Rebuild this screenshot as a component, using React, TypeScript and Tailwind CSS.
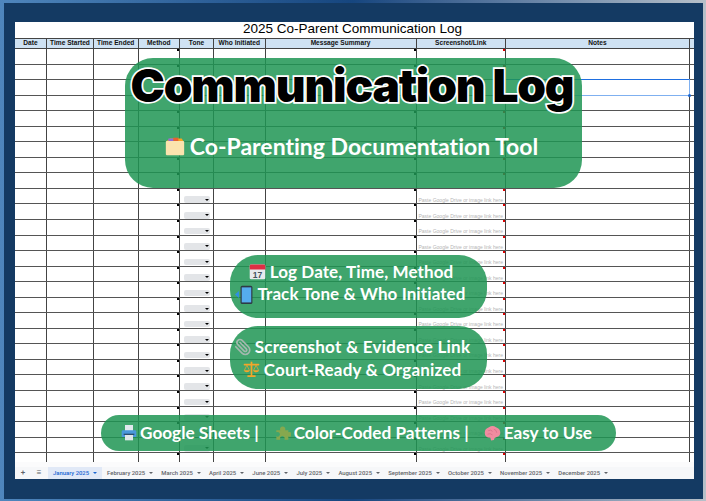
const font = "font-['Lato','Open_Sans',sans-serif] [font-variant-ligatures:none]";
const card = "absolute bg-[#1f9553]/85 text-white font-bold";
const colWidths = [32, 47, 44.5, 41.5, 34, 51.5, 151, 89.5, 184];
const headers = ["Date", "Time Started", "Time Ended", "Method", "Tone", "Who Initiated", "Message Summary", "Screenshot/Link", "Notes"];
const tabs = ["February 2025", "March 2025", "April 2025", "June 2025", "July 2025", "August 2025", "September 2025", "October 2025", "November 2025", "December 2025"];
const rows = Array.from({ length: 27 }, (_, i) => i);

const Folder = () => (
  <svg viewBox="0 0 24 24" className="w-5 h-5 shrink-0">
    <path d="M2 6 L6 3 H20 L22 6 Z" fill="#f5a623" />
    <rect x="4" y="3" width="7" height="5" fill="#8e6cd8" />
    <rect x="10" y="2" width="6" height="6" fill="#e8622c" />
    <rect x="1" y="6" width="22" height="17" rx="1" fill="#fbe3ae" />
  </svg>
);
const Calendar = () => (
  <svg viewBox="0 0 24 24" className="w-[17px] h-[17px] shrink-0">
    <rect x="1" y="2" width="22" height="21" rx="2" fill="#e8eaed" />
    <path d="M1 9 V4 a2 2 0 0 1 2 -2 H21 a2 2 0 0 1 2 2 V9 Z" fill="#dd2e44" />
    <text x="12" y="21" textAnchor="middle" fontSize="12" fontWeight="700" fill="#45535e" fontFamily="Liberation Sans">17</text>
  </svg>
);
const Phone = () => (
  <svg viewBox="0 0 24 24" className="w-[19px] h-[19px] shrink-0">
    <path d="M0 12 L5 7.5 V16.5 Z" fill="#2f8fe6" />
    <rect x="7" y="1" width="15" height="23" rx="2" fill="#2e3a45" />
    <rect x="8.5" y="3" width="12" height="19" fill="#55acee" />
  </svg>
);
const Clip = () => (
  <svg viewBox="0 0 24 24" className="w-[18px] h-[18px] shrink-0" fill="none" stroke="#a3b8ae" strokeWidth="2.2" strokeLinecap="round" strokeLinejoin="round">
    <path transform="translate(24 0) scale(-1 1)" d="m16 6-8.414 8.586a2 2 0 0 0 2.829 2.829l8.414-8.586a4 4 0 1 0-5.657-5.657l-8.379 8.551a6 6 0 1 0 8.485 8.485l8.379-8.551" />
  </svg>
);
const Scales = () => (
  <svg viewBox="0 0 24 24" className="w-[17px] h-[17px] shrink-0" fill="#f4a62a">
    <rect x="1" y="4" width="22" height="2.4" rx="1" />
    <rect x="10.8" y="1" width="2.4" height="20" />
    <rect x="6" y="20" width="12" height="2.6" rx="1" />
    <path d="M1 13 H10 Q9 16 5.5 16 Q2 16 1 13 Z M14 13 H23 Q22 16 18.5 16 Q15 16 14 13 Z" />
    <path d="M5.5 6 L2 13 M5.5 6 L9 13 M18.5 6 L15 13 M18.5 6 L22 13" stroke="#f4a62a" strokeWidth="1" fill="none" />
  </svg>
);
const Printer = () => (
  <svg viewBox="0 0 24 24" className="w-[16px] h-[16px] shrink-0">
    <rect x="6" y="0" width="12" height="9" fill="#e1e8ed" />
    <path d="M1 10 a2 2 0 0 1 2 -2 H21 a2 2 0 0 1 2 2 V18 H1 Z" fill="#4a98dc" />
    <rect x="6" y="14" width="12" height="9" fill="#dfe6ea" />
    <rect x="4" y="13" width="16" height="2" fill="#2d4f6e" />
  </svg>
);
const Puzzle = () => (
  <svg viewBox="0 0 24 24" className="w-[16px] h-[16px] shrink-0" fill="#86a84e">
    <path d="M2 8 H8 a4 4 0 1 1 7 0 H20 V11 a3.5 3.5 0 1 1 0 6 V22 H14 a3.5 3.5 0 1 0 -6 0 H2 V17 a3.5 3.5 0 1 0 0 -6 Z" />
  </svg>
);
const Brain = () => (
  <svg viewBox="0 0 24 24" className="w-[17px] h-[17px] shrink-0">
    <path d="M7 3 Q12 0 17 3 Q23 5 23 11 Q23 16 18 17 Q14 18 14 21 L10 22 L9 18 Q1 18 1 11 Q1 5 7 3 Z" fill="#f08ca0" />
    <path d="M6 8 Q10 6 12 9 M14 6 Q18 7 18 11 M5 13 Q9 11 12 14" stroke="#d9708a" strokeWidth="1.2" fill="none" />
  </svg>
);

const Caret = ({ color = "border-t-black" }: { color?: string }) => (
  <span className={`w-0 h-0 border-l-[2px] border-r-[2px] border-t-[2px] border-l-transparent border-r-transparent ${color}`} />
);

const Cell = ({ col, row }: { col: number; row: number }) => (
  <div className="relative flex items-end justify-center pb-[0.5px] border-r border-[#444] overflow-hidden" style={{ width: colWidths[col] }}>
    {(col === 3 || col === 6) && <span className="absolute top-0 right-0 w-[2px] h-[2px] bg-black" />}
    {col === 7 && <span className="absolute top-0 right-0 w-[2px] h-[2px] bg-[#d00]" />}
    {col === 4 && row >= 9 && row < 26 && (
      <div className="w-[26px] h-[6.5px] bg-[#e3e5e8] rounded-[2px] flex items-center justify-end pr-[1px]">
        <Caret />
      </div>
    )}
    {col === 7 && row >= 9 && row < 26 && (
      <span className="text-[5px] leading-[6px] text-[#b5b5b5] whitespace-nowrap">Paste Google Drive or image link here</span>
    )}
  </div>
);

export default function App() {
  return (
    <div className="w-[706px] h-[501px] overflow-hidden bg-gradient-to-r from-[#4f86bd] via-[#16467f] to-[#b7c0c9] pt-[3px] pl-[4px] pr-[3px] pb-[2px] relative">
      <div className="w-full h-full bg-[#143a63] pt-[19px] pl-[11px]">
        <div className="w-[679px] h-[457px] bg-white flex flex-col font-['Liberation_Sans',sans-serif] overflow-hidden">
          <div className="h-[16px] text-center text-[13.5px] leading-[14px] text-black pr-[4px] shrink-0">2025 Co-Parent Communication Log</div>
          <div className="flex h-[11px] bg-[#cfe2f3] border-y border-[#444] shrink-0">
            {headers.map((h, i) => (
              <div key={h} className="flex items-center justify-center border-r border-[#444] text-[6.6px] font-bold leading-none text-[#111]" style={{ width: colWidths[i] }}>
                {h}
              </div>
            ))}
          </div>
          <div className="h-[413px] overflow-hidden shrink-0">
            {rows.map((r) => (
              <div key={r} className="flex h-[15.56px] border-b border-[#555]">
                {colWidths.map((_, c) => (
                  <Cell key={c} col={c} row={r} />
                ))}
              </div>
            ))}
          </div>
          <div className="h-[5px] bg-[#fbfbfc] shrink-0" />
          <div className="flex-1 bg-[#f6f7f9] flex items-center text-[5.9px] text-[#5f6368] font-['Roboto',sans-serif] font-medium">
            <span className="w-[15px] pl-[1px] text-center text-[8px] leading-none">+</span>
            <span className="w-[15px] pl-[3px] text-center text-[8px] leading-none">≡</span>
            <div className="flex items-center gap-[4px] h-full bg-[#e1e9f7] text-[#1a66d2] pl-[5px] pr-[5px] ml-[3px] whitespace-nowrap">
              January 2025 <Caret color="border-t-[#1a66d2]" />
            </div>
            {tabs.map((t, i) => (
              <div key={t} className={`flex items-center gap-[4px] whitespace-nowrap ${i === 0 ? "ml-[5px]" : "ml-[8.2px]"}`}>
                {t} <Caret color="border-t-[#5f6368]" />
              </div>
            ))}
          </div>
        </div>
      </div>

      {/* selected cell */}
      <div className="absolute left-[506px] top-[79px] w-[184px] h-[17px] border-y border-r border-t-[#1f6fe0] border-b-[#7fb0f0] border-r-[#7fb0f0]">
        <span className="absolute -right-[2px] -bottom-[2px] w-[3px] h-[3px] rounded-full bg-[#1a66d2]" />
      </div>

      {/* title card */}
      <div className={`${card} left-[125px] top-[58px] w-[457px] h-[130px] rounded-[28px] flex flex-col items-center ${font}`}>
        <div className="mt-[2px] h-[50px] pr-[3px] text-[46px] leading-[50px] font-['Inter',sans-serif] font-black text-black tracking-[-1.2px] [-webkit-text-stroke:3.5px_white] [paint-order:stroke_fill] whitespace-nowrap">Communication Log</div>
        <div className="mt-[22px] pr-[4px] flex items-center gap-[5px] text-[23px] leading-[28px] whitespace-nowrap">
          <Folder /> Co-Parenting Documentation Tool
        </div>
      </div>

      <div className={`${card} left-[230px] top-[255px] w-[257px] h-[63px] pb-[7px] rounded-[28px] flex flex-col items-center justify-center text-[17px] leading-[22.5px] ${font}`}>
        <div className="flex items-center gap-[4px] pr-[15px] tracking-[0.1px] whitespace-nowrap"><Calendar /> Log Date, Time, Method</div>
        <div className="flex items-center gap-[3px] pr-[16px] tracking-[0.1px] whitespace-nowrap"><Phone /> Track Tone & Who Initiated</div>
      </div>

      <div className={`${card} left-[230px] top-[326px] w-[257px] h-[63px] pt-[2px] rounded-[28px] flex flex-col items-center justify-center text-[17px] leading-[22.5px] ${font}`}>
        <div className="flex items-center gap-[3px] pr-[13px] tracking-[0.25px] whitespace-nowrap"><Clip /> Screenshot & Evidence Link</div>
        <div className="flex items-center gap-[4px] pr-[13px] tracking-[0.15px] whitespace-nowrap"><Scales /> Court-Ready & Organized</div>
      </div>

      <div className={`${card} left-[101px] top-[415px] w-[515px] h-[36px] pl-[20px] rounded-[18px] flex items-center gap-[3px] text-[17.2px] whitespace-nowrap ${font}`}>
        <Printer /> Google Sheets |
        <span className="w-[10px]" />
        <Puzzle /> Color-Coded Patterns |
        <span className="w-[9px]" />
        <Brain /> Easy to Use
      </div>
    </div>
  );
}
